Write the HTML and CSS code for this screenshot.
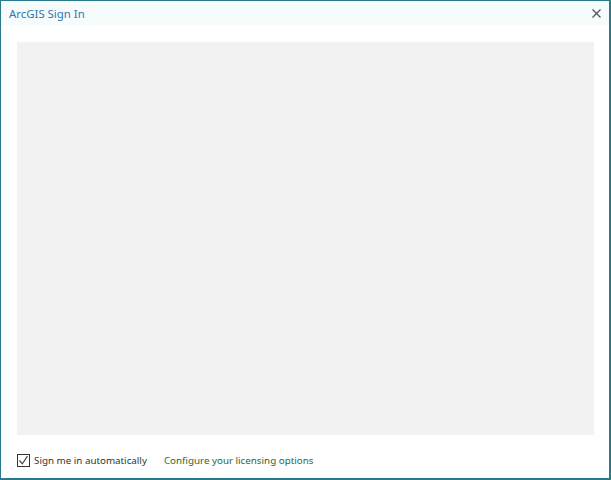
FILE: index.html
```html
<!DOCTYPE html>
<html lang="en">
<head>
    <meta charset="UTF-8">
    <title>ArcGIS Sign In</title>
    <link rel="stylesheet" href="styles.css">
</head>
<body>
    <div class="window">
        <div class="titlebar">
            <span class="title">ArcGIS Sign In</span>
            <span class="close">
                <svg width="9" height="9" viewBox="0 0 9 9"><path d="M0.5 0.5 L8.5 8.5 M8.5 0.5 L0.5 8.5" stroke="#555" stroke-width="1.3"/></svg>
            </span>
        </div>
        <div class="content">
            <div class="frame"></div>
            <div class="footer">
                <label class="check">
                    <span class="box">
                        <svg width="11" height="11" viewBox="0 0 11 11"><path d="M1.5 5.5 L4.3 8.8 L9.5 1.2" fill="none" stroke="#444" stroke-width="1.2"/></svg>
                    </span>
                    Sign me in automatically
                </label>
                <a class="link" href="#">Configure your licensing options</a>
            </div>
        </div>
    </div>
</body>
</html>
```

FILE: styles.css
```css
html, body {
    margin: 0;
    padding: 0;
    background: #ffffff;
    font-family: "Noto Sans", "Open Sans", sans-serif;
}

.window {
    width: 611px;
    height: 480px;
    box-sizing: border-box;
    border: 1px solid #2b7a8c;
    border-right-width: 2px;
    border-bottom-width: 2px;
    display: flex;
    flex-direction: column;
    background: #ffffff;
}

.titlebar {
    height: 24px;
    background: #f6fbfb;
    display: flex;
    align-items: center;
    justify-content: space-between;
    padding: 0 8px 0 8px;
}

.title {
    color: #2f76b3;
    font-size: 11.4px;
    margin-top: 1px;
}

.close {
    display: flex;
    margin-top: 1px;
}

.content {
    flex: 1;
    display: flex;
    flex-direction: column;
    padding: 17px 15px 0 16px;
}

.frame {
    height: 393px;
    background: #f2f2f2;
}

.footer {
    display: flex;
    align-items: center;
    margin-top: 19px;
    font-size: 9.8px;
    color: #333333;
}

.check {
    display: flex;
    align-items: center;
}

.box {
    width: 11px;
    height: 11px;
    border: 1px solid #333333;
    display: flex;
    margin-right: 4px;
}

.link {
    color: #2e6a2e;
    text-decoration: none;
    margin-left: 17px;
}
```
